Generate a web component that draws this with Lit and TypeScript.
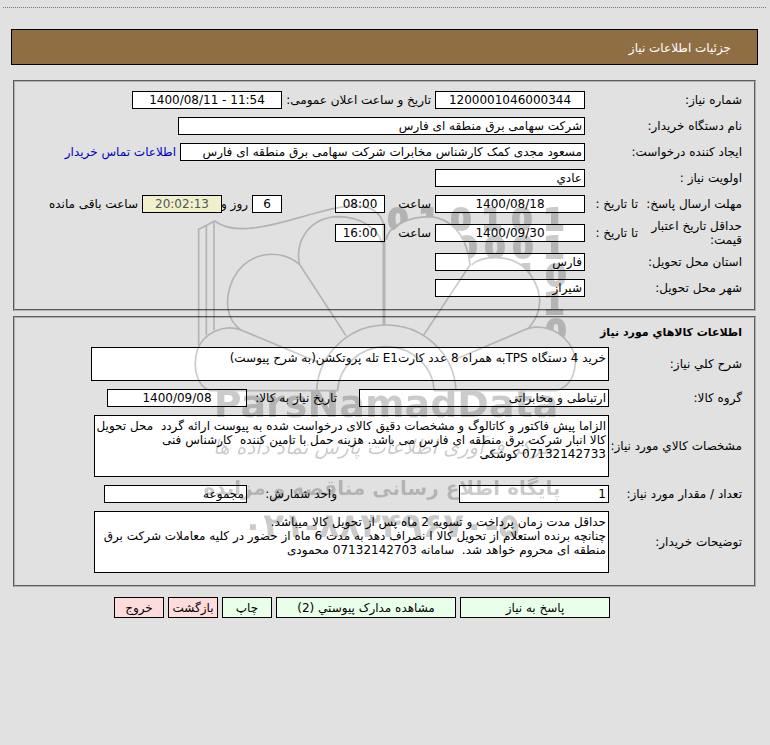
import { LitElement, html, svg, css } from "lit";
import { customElement } from "lit/decorators.js";

const digits: [string, number, number][] = [
  ["0", 238, 40], ["1", 269, 40], ["0", 301, 40], ["1", 332, 40], ["0", 362, 40], ["1", 394, 40],
  ["0", 307, 68], ["0", 335, 68], ["0", 363, 68], ["1", 394, 68],
  ["1", 366, 96], ["0", 396, 96],
  ["1", 394, 124],
  ["0", 396, 151],
];

@customElement("app-watermark")
export class AppWatermark extends LitElement {
  static styles = css`
    :host { display: block; pointer-events: none; opacity: 0.2; }
    svg { display: block; width: 450px; height: 370px; overflow: visible; }
    .line { fill: none; stroke: #000; stroke-width: 5; }
    .thick { stroke-width: 9; }
    .digit { font: bold 30px "DejaVu Sans", sans-serif; text-anchor: middle; stroke: #000; stroke-width: 2; }
    .brand { font: bold 38px "DejaVu Sans", sans-serif; text-anchor: middle; }
    .script { font: italic 20px "DejaVu Sans", sans-serif; text-anchor: middle; }
    .tag { font: bold 20px "DejaVu Sans", sans-serif; text-anchor: middle; }
    .phone { font: bold 34px "DejaVu Sans", sans-serif; text-anchor: middle; }
  `;
  render() {
    return html`<svg viewBox="0 0 450 370" aria-hidden="true">
      ${svg`
      <mask id="petals" maskUnits="userSpaceOnUse" x="0" y="0" width="450" height="370">
        <rect width="450" height="370" fill="#fff" />
        <g transform="scale(0.3333)" fill="#000">
          <path d="M672 190C685 110 740 80 810 80C870 85 920 130 930 225L790 437H672Z" />
          <path d="M935 225C960 200 1040 190 1090 230C1150 290 1155 360 1105 415L893 505L790 437Z" />
          <path d="M1105 415C1170 400 1230 440 1245 500V602H893V505Z" />
        </g>
      </mask>
      <g class="line" transform="scale(0.3333)">
        <path d="M116 465V118M139 435V107M162 420V93" />
        <path d="M114 119L164 93C215 130 290 120 420 82C480 66 510 55 560 49C620 42 660 60 672 105" />
        <path d="M418 222C405 150 450 82 535 80C600 80 655 115 666 160" />
        <path d="M418 222L558 437" />
        <path class="thick" d="M672 100V405" />
        <path d="M418 222C350 170 260 190 220 265C190 330 200 390 243 420L475 517" />
        <path d="M243 420C190 400 130 430 112 480C95 540 115 590 150 602" />
        <path d="M470 602C475 490 570 405 678 405C790 405 883 490 888 602" />
        <path d="M533 602C537 530 600 470 678 470C756 470 820 530 822 602" />
        <path d="M150 602H533M822 602H1190" />
        <path d="M678 150C685 110 740 80 810 80C870 85 920 130 930 225L790 437" />
        <path d="M935 225C960 200 1040 190 1090 230C1150 290 1155 360 1105 415L893 505" />
        <path d="M1105 415C1170 400 1230 440 1245 500C1250 550 1230 590 1190 602" />
      </g>
      <g mask="url(#petals)">
        ${digits.map(([d, x, y]) => svg`<text class="digit" x=${x} y=${y}>${d}</text>`)}
      </g>
      <text class="brand" x="226" y="227">ParsNamadData</text>
      <text class="script" x="223" y="264" direction="rtl">مرکز فرآوری اطلاعات پارس نماد داده ها</text>
      <text class="tag" x="222" y="305" direction="rtl">پایگاه اطلاع رسانی مناقصه و مزایده</text>
      <text class="phone" x="221" y="347">۰۲۱-۸۸۳۴۹۶۷۰-۵</text>`}
    </svg>`;
  }
}

@customElement("app-root")
export class AppRoot extends LitElement {
  static styles = css`
    :host {
      display: block;
      min-height: 100vh;
      box-sizing: border-box;
      padding: 7px 4px 24px 3px;
      background: #e1e1e1;
      color: #000;
      font: 12px/14px "DejaVu Sans", sans-serif;
      overflow: hidden;
    }
    .page { position: relative; border-top: 1px dotted #777; padding: 21px 8px 0; }
    .banner {
      box-sizing: border-box; height: 36px; margin: 0; padding: 0 26px;
      border: 1px solid #000; background: #8f6e43; color: #fff;
      font: inherit; line-height: 36px;
    }
    fieldset {
      min-width: 0; margin: 0 2px; padding: 5px 12px 8px;
      border: 2px groove #b0b0b0;
    }
    .need { margin-top: 15px; }
    .goods { margin-top: 5px; padding: 0 12px 12px; }
    .title { margin: 0; font: inherit; font-size: 11px; font-weight: bold; line-height: 29px; }
    .row { display: flex; align-items: center; min-height: 26px; }
    .row.tall { min-height: 32px; }
    .goods .row { min-height: 0; margin-bottom: 8px; }
    .goods .row:last-child { margin-bottom: 0; }
    .head { flex: 0 0 157px; }
    .head.split { flex-basis: 104px; }
    .sub { flex: 0 0 53px; white-space: nowrap; }
    .goods .head { flex-basis: 133px; white-space: nowrap; }
    .hour { flex: 0 0 46px; }
    .unit { flex: 0 0 90px; white-space: nowrap; }
    .gap { margin-inline-start: 22px; }
    .gap-wide { margin-inline-start: 122px; }
    .gap-day { margin-inline-start: 53px; }
    .after { margin-inline-start: 4px; white-space: nowrap; }
    .days { flex: 0 0 26px; min-width: 0; }
    .public { flex: 0 0 149px; }
    input, textarea {
      box-sizing: border-box; margin: 0; min-width: 0; padding: 0 2px;
      border: 1px solid #000; border-radius: 0; background: #fff; color: #000;
      font: inherit; outline: none; resize: none; overflow: hidden;
    }
    input { height: 18px; }
    textarea { padding: 3px 2px 3px 0; height: 62px; }
    .short { height: 34px; }
    .center { text-align: center; }
    .left { background: #f0f0cc; color: #555; }
    .w30 { flex: 0 1 30px; } .w50 { flex: 0 1 50px; } .w80 { flex: 0 1 80px; }
    .w140 { flex: 0 1 140px; } .w143 { flex: 0 1 143px; } .w150 { flex: 0 1 150px; }
    .w250 { flex: 0 1 250px; } .w405 { flex: 0 1 405px; } .w407 { flex: 0 1 407px; }
    .w515 { flex: 0 1 515px; } .w518 { flex: 0 1 518px; }
    a { color: #0000c0; text-decoration: none; white-space: nowrap; }
    .actions { display: flex; gap: 4px; margin-top: 10px; padding-inline-start: 148px; }
    button {
      box-sizing: border-box; height: 21px; padding: 0; border: 1px solid #000;
      border-radius: 0; background: #eaffea; color: #000; font: inherit; white-space: nowrap;
    }
    .danger { background: #ffdcdc; }
    .w180 { flex: 0 1 180px; }
    app-watermark { position: absolute; left: 157px; top: 182px; }
  `;

  render() {
    return html`<main class="page" dir="rtl">
      <h1 class="banner">جزئیات اطلاعات نیاز</h1>
      <fieldset class="need">
        <div class="row">
          <label class="head" for="no">شماره نیاز:</label>
          <input id="no" class="w150 center" value="1200001046000344" />
          <label class="public after" for="pub">تاریخ و ساعت اعلان عمومی:</label>
          <input id="pub" class="w150 center" dir="ltr" value="1400/08/11 - 11:54" />
        </div>
        <div class="row">
          <label class="head" for="org">نام دستگاه خریدار:</label>
          <input id="org" class="w407" value="شرکت سهامی برق منطقه ای فارس" />
        </div>
        <div class="row">
          <label class="head" for="by">ایجاد کننده درخواست:</label>
          <input id="by" class="w405" value="مسعود مجدی کمک کارشناس مخابرات شرکت سهامی برق منطقه ای فارس" />
          <a class="after" href="#contact">اطلاعات تماس خریدار</a>
        </div>
        <div class="row">
          <label class="head" for="pri">اولویت نیاز :</label>
          <input id="pri" class="w150" value="عادي" />
        </div>
        <div class="row">
          <span class="head split">مهلت ارسال پاسخ:</span>
          <label class="sub" for="d1">تا تاریخ :</label>
          <input id="d1" class="w150 center" value="1400/08/18" />
          <label class="hour after" for="h1">ساعت</label>
          <input id="h1" class="w50 center" value="08:00" />
          <input id="dd" class="w30 center gap-day" value="6" />
          <label class="days after" for="dd">روز و</label>
          <input id="rem" class="w80 center left" value="20:02:13" />
          <label class="after" for="rem">ساعت باقی مانده</label>
        </div>
        <div class="row tall">
          <span class="head split">حداقل تاریخ اعتبار قیمت:</span>
          <label class="sub" for="d2">تا تاریخ :</label>
          <input id="d2" class="w150 center" value="1400/09/30" />
          <label class="hour after" for="h2">ساعت</label>
          <input id="h2" class="w50 center" value="16:00" />
        </div>
        <div class="row">
          <label class="head" for="prov">استان محل تحویل:</label>
          <input id="prov" class="w150" value="فارس" />
        </div>
        <div class="row">
          <label class="head" for="city">شهر محل تحویل:</label>
          <input id="city" class="w150" value="شیراز" />
        </div>
      </fieldset>

      <fieldset class="goods">
        <h2 class="title">اطلاعات کالاهاي مورد نیاز</h2>
        <div class="row">
          <label class="head" for="desc">شرح کلي نیاز:</label>
          <textarea id="desc" class="w518 short" .value=${"خرید 4 دستگاه TPSبه همراه 8 عدد کارتE1 تله پروتکشن(به شرح پیوست)"}></textarea>
        </div>
        <div class="row">
          <label class="head" for="grp">گروه کالا:</label>
          <input id="grp" class="w250" value="ارتباطی و مخابراتی" />
          <label class="unit gap" for="nd">تاریخ نیاز به کالا:</label>
          <input id="nd" class="w140 center" value="1400/09/08" />
        </div>
        <div class="row">
          <label class="head" for="spec">مشخصات کالاي مورد نیاز:</label>
          <textarea id="spec" class="w515" .value=${"الزاما پیش فاکتور و کاتالوگ و مشخصات دقیق کالای درخواست شده به پیوست ارائه گردد  محل تحویل کالا انبار شرکت برق منطقه ای فارس می باشد. هزینه حمل با تامین کننده  کارشناس فنی\n07132142733 کوشکی"}></textarea>
        </div>
        <div class="row">
          <label class="head" for="qty">تعداد / مقدار مورد نیاز:</label>
          <input id="qty" class="w150" value="1" />
          <label class="unit gap-wide" for="un">واحد شمارش:</label>
          <input id="un" class="w143" value="مجموعه" />
        </div>
        <div class="row">
          <label class="head" for="note">توضیحات خریدار:</label>
          <textarea id="note" class="w515" .value=${"حداقل مدت زمان پرداخت و تسویه 2 ماه پس از تحویل کالا میباشد.\nچنانچه برنده استعلام از تحویل کالا ا نصراف دهد به مدت 6 ماه از حضور در کلیه معاملات شرکت برق منطقه ای محروم خواهد شد.  سامانه 07132142703 محمودی"}></textarea>
        </div>
      </fieldset>

      <div class="actions">
        <button class="w150" type="button">پاسخ به نیاز</button>
        <button class="w180" type="button">مشاهده مدارک پیوستي (2)</button>
        <button class="w50" type="button">چاپ</button>
        <button class="w50 danger" type="button">بازگشت</button>
        <button class="w50 danger" type="button">خروج</button>
      </div>
      <app-watermark></app-watermark>
    </main>`;
  }
}
